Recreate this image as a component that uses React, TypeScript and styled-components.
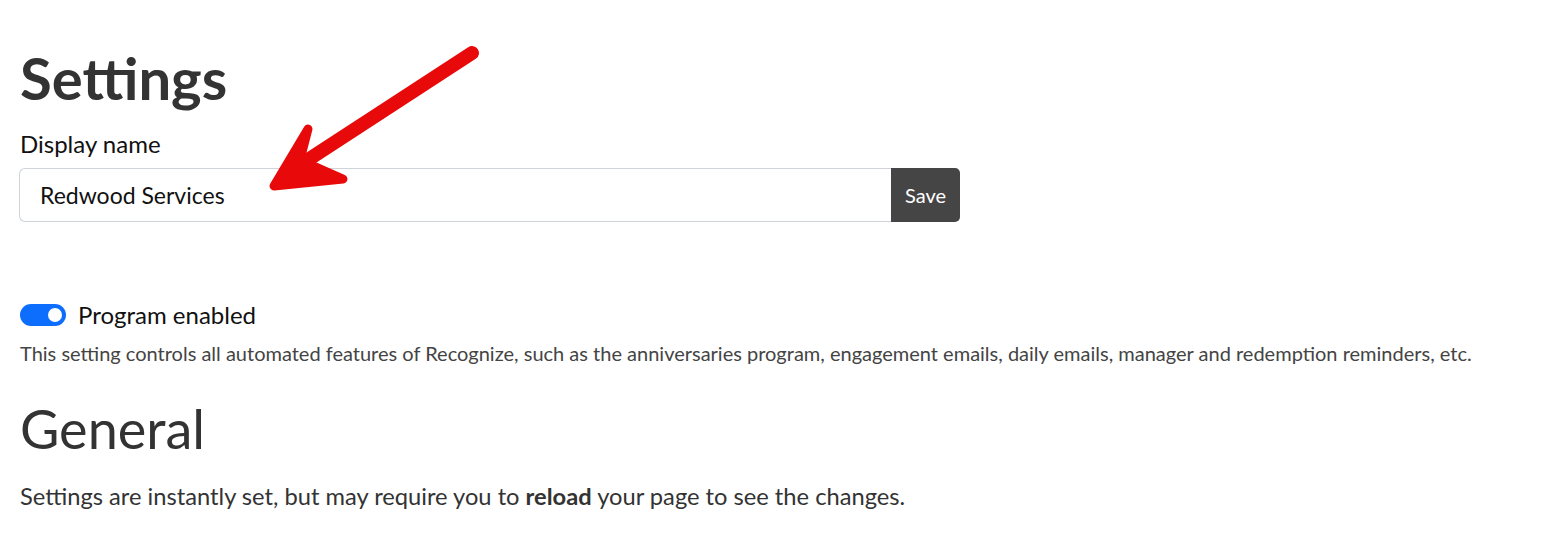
import React, { useState } from "react";
import styled, { createGlobalStyle } from "styled-components";

const GlobalStyle = createGlobalStyle`
  html, body {
    margin: 0;
    padding: 0;
    background: #ffffff;
  }
  body {
    font-family: Lato, "Noto Sans", sans-serif;
    color: #222;
  }
`;

const Page = styled.div`
  position: relative;
  padding: 42px 20px 0 20px;
`;

const Title = styled.h1`
  margin: 0;
  font-size: 58px;
  font-weight: 700;
  line-height: 72px;
  color: #333;
`;

const Label = styled.label`
  display: block;
  margin: 15px 0 9px;
  font-size: 24px;
  line-height: 30px;
  color: #111;
`;

const InputGroup = styled.div`
  display: flex;
  width: 941px;
  height: 54px;
  margin-left: -1px;
`;

const NameInput = styled.input`
  flex: 1;
  min-width: 0;
  box-sizing: border-box;
  border: 1px solid #cfd3da;
  border-right: none;
  border-radius: 6px 0 0 6px;
  padding: 0 20px;
  font-family: Lato, sans-serif;
  font-size: 23px;
  color: #111;
  outline: none;
`;

const SaveButton = styled.button`
  width: 69px;
  border: none;
  border-radius: 0 5px 5px 0;
  background: #454545;
  color: #fff;
  font-family: Lato, sans-serif;
  font-size: 20px;
  cursor: pointer;
`;

const ToggleRow = styled.div`
  display: flex;
  align-items: center;
  gap: 12px;
  margin-top: 78px;
`;

const Toggle = styled.button<{ $on: boolean }>`
  position: relative;
  width: 46px;
  height: 22px;
  padding: 0;
  border: none;
  border-radius: 11px;
  background: ${(p) => (p.$on ? "#0d6efd" : "#c7cbd1")};
  cursor: pointer;

  &::after {
    content: "";
    position: absolute;
    top: 4px;
    left: ${(p) => (p.$on ? "28px" : "4px")};
    width: 14px;
    height: 14px;
    border-radius: 50%;
    background: #fff;
  }
`;

const ToggleLabel = styled.span`
  font-size: 24px;
  line-height: 30px;
  color: #111;
`;

const Help = styled.p`
  margin: 10px 0 0;
  font-size: 20px;
  line-height: 26px;
  color: #444;
`;

const Subtitle = styled.h2`
  margin: 30px 0 0;
  font-size: 54px;
  font-weight: 400;
  line-height: 66px;
  color: #333;
`;

const Note = styled.p`
  margin: 19px 0 0;
  font-size: 23.7px;
  line-height: 30px;
  color: #333;
`;

const Arrow = styled.svg`
  position: absolute;
  left: 0;
  top: 0;
  pointer-events: none;
`;

export default function App() {
  const [name, setName] = useState("Redwood Services");
  const [enabled, setEnabled] = useState(true);

  return (
    <Page>
      <GlobalStyle />
      <Title>Settings</Title>
      <Label htmlFor="display-name">Display name</Label>
      <InputGroup>
        <NameInput
          id="display-name"
          value={name}
          onChange={(e) => setName(e.target.value)}
        />
        <SaveButton>Save</SaveButton>
      </InputGroup>
      <ToggleRow>
        <Toggle $on={enabled} onClick={() => setEnabled(!enabled)} aria-label="Program enabled" />
        <ToggleLabel>Program enabled</ToggleLabel>
      </ToggleRow>
      <Help>
        This setting controls all automated features of Recognize, such as the anniversaries program,
        engagement emails, daily emails, manager and redemption reminders, etc.
      </Help>
      <Subtitle>General</Subtitle>
      <Note>
        Settings are instantly set, but may require you to <b>reload</b> your page to see the changes.
      </Note>

      <Arrow width="520" height="220" viewBox="0 0 520 220">
        <g fill="#e80a0a" stroke="#e80a0a" strokeLinecap="round" strokeLinejoin="round">
          <line x1="472" y1="53" x2="300" y2="165" strokeWidth="14" />
          <polygon points="308,129 274,186 343,179 300,160" strokeWidth="9" />
        </g>
      </Arrow>
    </Page>
  );
}
